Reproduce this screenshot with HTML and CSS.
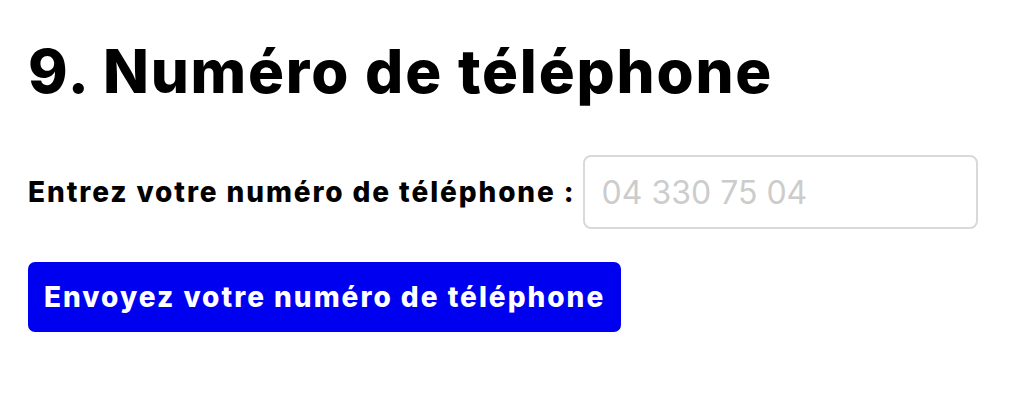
FILE: index.html
```html
<!DOCTYPE html>
<html lang="fr">
<head>
<meta charset="utf-8">
<link rel="stylesheet" href="styles.css">
</head>
<body>
<main class="page">
  <h1 class="title">9. Numéro de téléphone</h1>
  <form class="form">
    <div class="row">
      <label class="label" for="tel">Entrez votre numéro de téléphone :</label>
      <input class="input" id="tel" type="tel" placeholder="04 330 75 04">
    </div>
    <button class="btn" type="button">Envoyez votre numéro de téléphone</button>
  </form>
</main>
</body>
</html>
```
FILE: styles.css
```css
html, body {
  margin: 0;
  background: #fff;
}
body {
  font-family: Inter, "Liberation Sans", sans-serif;
  color: #000;
}
.page {
  padding: 37px 28px;
}
.title {
  margin: 0;
  font-size: 60px;
  font-weight: 800;
  line-height: 69px;
  letter-spacing: 1.8px;
}
.form {
  margin-top: 49px;
  display: flex;
  flex-direction: column;
  align-items: flex-start;
  gap: 33px;
}
.row {
  display: flex;
  align-items: center;
  gap: 7px;
}
.label {
  font-size: 28px;
  font-weight: 800;
  letter-spacing: 1.9px;
}
.input {
  box-sizing: border-box;
  width: 395px;
  height: 74px;
  border: 2px solid #d9d9d9;
  border-radius: 8px;
  padding: 0 17px;
  font-family: Inter, "Liberation Sans", sans-serif;
  font-size: 32px;
  color: #000;
  outline: none;
}
.input::placeholder {
  color: #cccccc;
}
.btn {
  background: #0000f0;
  color: #fff;
  border: none;
  border-radius: 7px;
  height: 70px;
  padding: 0 16px;
  font-family: Inter, "Liberation Sans", sans-serif;
  font-size: 28px;
  font-weight: 800;
  letter-spacing: 2px;
}
```
